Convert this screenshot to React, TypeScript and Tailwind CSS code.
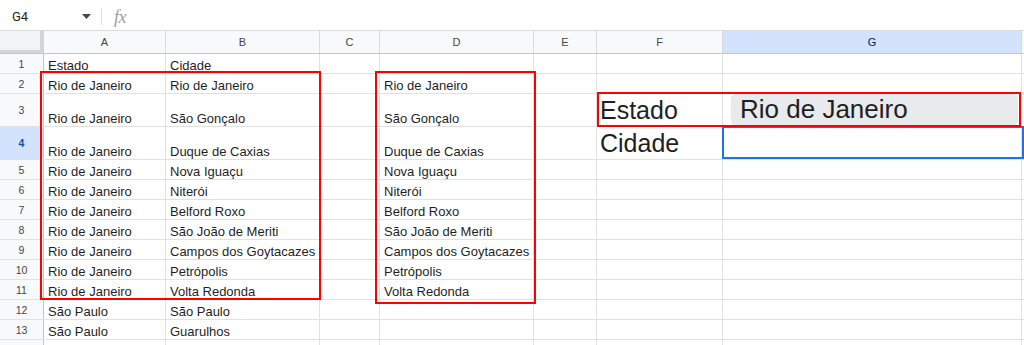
import React from "react";

const cols = [
  { key: "A", w: "w-[122px]" },
  { key: "B", w: "w-[154px]" },
  { key: "C", w: "w-[60px]" },
  { key: "D", w: "w-[154px]" },
  { key: "E", w: "w-[63px]" },
  { key: "F", w: "w-[126px]" },
  { key: "G", w: "w-[299px]" },
];

const cities = [
  "Rio de Janeiro",
  "São Gonçalo",
  "Duque de Caxias",
  "Nova Iguaçu",
  "Niterói",
  "Belford Roxo",
  "São João de Meriti",
  "Campos dos Goytacazes",
  "Petrópolis",
  "Volta Redonda",
];

type Row = { n: number; label: string; h: string; cells: Record<string, React.ReactNode> };

const rows: Row[] = [
  { n: 1, label: "1", h: "h-[20px]", cells: { A: "Estado", B: "Cidade" } },
  ...cities.map((c, i) => ({
    n: i + 2,
    label: String(i + 2),
    h: i === 1 || i === 2 ? "h-[33px]" : "h-[20px]",
    cells: { A: "Rio de Janeiro", B: c, D: c } as Record<string, React.ReactNode>,
  })),
  { n: 12, label: "12", h: "h-[20px]", cells: { A: "São Paulo", B: "São Paulo" } },
  { n: 13, label: "13", h: "h-[20px]", cells: { A: "São Paulo", B: "Guarulhos" } },
  { n: 14, label: "", h: "h-[20px]", cells: {} },
];

rows[2].cells.F = <span className="text-[25px] leading-[1.15]">Estado</span>;
rows[2].cells.G = "chip";
rows[3].cells.F = <span className="text-[25px] leading-[1.15]">Cidade</span>;

export default function App() {
  return (
    <div className="relative w-[1024px] h-[345px] overflow-hidden bg-white font-['Liberation_Sans',Arial,sans-serif] text-[#1f1f1f]">
      {/* Formula bar */}
      <div className="flex h-[31px] items-center border-b border-[#dadce0] bg-white pt-[3px]">
        <div className="flex w-[101px] items-center pl-[12px] pr-[10px]">
          <span className="text-[13px] text-[#1f1f1f] font-['Roboto','Liberation_Sans',sans-serif]">G4</span>
          <svg className="ml-auto" width="9" height="5" viewBox="0 0 9 5">
            <path d="M0 0 L9 0 L4.5 5 Z" fill="#444746" />
          </svg>
        </div>
        <div className="h-[17px] w-[1px] bg-[#dadce0]" />
        <span className="ml-[12px] font-['Liberation_Serif',serif] italic text-[18px] leading-none text-[#9aa0a6] tracking-[-0.5px]">fx</span>
      </div>

      {/* Column headers */}
      <div className="flex h-[23px] border-b border-[#c4c7c5] bg-[#f8f9fa]">
        <div className="w-[44px] shrink-0 border-r-4 border-b-[3px] border-[#d3d5d8] bg-[#f1f3f4]" />
        {cols.map((c) => (
          <div
            key={c.key}
            className={`${c.w} shrink-0 flex items-center justify-center border-r border-[#dadce0] text-[11px] ${
              c.key === "G" ? "bg-[#d3e3fd] text-[#041e49]" : "text-[#444746]"
            }`}
          >
            {c.key}
          </div>
        ))}
        <div className="flex-1" />
      </div>

      {/* Rows */}
      {rows.map((r) => (
        <div key={r.n} className={`flex ${r.h} border-b border-[#e1e1e1]`}>
          <div
            className={`w-[44px] shrink-0 flex items-center justify-center border-r border-[#c4c7c5] pt-[2px] text-[10.5px] ${
              r.n === 4 ? "bg-[#d3e3fd] font-bold text-[#174ea6]" : "bg-[#f8f9fa] text-[#444746]"
            }`}
          >
            {r.label}
          </div>
          {cols.map((c) => {
            const v = r.cells[c.key];
            if (v === "chip") {
              return (
                <div key={c.key} className={`${c.w} shrink-0 flex border-r border-[#e1e1e1] pl-[8px] pr-[3px]`}>
                  <div className="flex flex-1 items-end rounded-[5px] bg-[#e8eaed] pl-[9px] pb-[1px]">
                    <span className="text-[26px] leading-[1.15] text-[#1f1f1f]">Rio de Janeiro</span>
                  </div>
                </div>
              );
            }
            const big = c.key === "F" && (r.n === 3 || r.n === 4);
            return (
              <div
                key={c.key}
                className={`${c.w} shrink-0 flex items-end overflow-hidden whitespace-nowrap border-r border-[#e1e1e1] text-[13px] ${
                  big ? "pl-[3px] pb-[1px] leading-[1.15]" : "pl-[4px] pb-[1px] leading-[1]"
                }`}
              >
                {v}
              </div>
            );
          })}
          <div className="flex-1" />
        </div>
      ))}

      {/* Selection G4 */}
      <div className="pointer-events-none absolute left-[722px] top-[126px] h-[33px] w-[302px] border-2 border-[#1a73e8]" />

      {/* Red annotation boxes */}
      <div className="pointer-events-none absolute left-[40px] top-[71px] h-[229px] w-[281px] border-2 border-[#ff0000]" />
      <div className="pointer-events-none absolute left-[375px] top-[71px] h-[233px] w-[161px] border-2 border-[#ff0000]" />
      <div className="pointer-events-none absolute left-[597px] top-[92px] h-[35px] w-[424px] border-2 border-[#ff0000]" />
    </div>
  );
}
